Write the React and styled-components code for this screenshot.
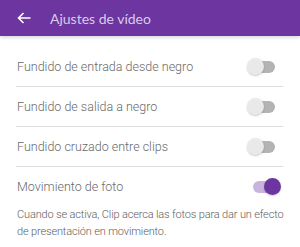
import React, { useState } from "react";
import styled, { createGlobalStyle } from "styled-components";

const GlobalStyle = createGlobalStyle`
  body {
    margin: 0;
    background: #ffffff;
    font-family: Roboto, "Liberation Sans", sans-serif;
  }
`;

const Page = styled.div`
  width: 300px;
  height: 247px;
  background: #ffffff;
  overflow: hidden;
`;

const Header = styled.header`
  height: 36px;
  background: #6c35a0;
  display: flex;
  align-items: center;
  padding-left: 17px;
  gap: 19px;
  box-shadow: 0 1px 4px rgba(0, 0, 0, 0.2);
  position: relative;
`;

const Title = styled.h1`
  margin: 0;
  font-family: Lato, sans-serif;
  font-size: 14px;
  font-weight: 400;
  color: #d9cbe9;
`;

const List = styled.div`
  padding: 11px 17px 0 16px;
`;

const Row = styled.div`
  height: ${(p) => p.$height || 40}px;
  box-sizing: border-box;
  display: flex;
  align-items: center;
  justify-content: space-between;
  border-bottom: ${(p) => (p.$last ? "none" : "1px solid #dcdcdc")};
  padding-left: 1px;
`;

const Label = styled.span`
  font-size: 12.5px;
  font-weight: 300;
  color: #6a6a6a;
`;

const Note = styled.p`
  margin: 0 -3px 0 0;
  padding-left: 1px;
  font-size: 11px;
  letter-spacing: -0.15px;
  font-weight: 300;
  line-height: 17px;
  color: #606060;
`;

const Switch = styled.button`
  position: relative;
  width: 34px;
  height: 17px;
  margin-right: 2px;
  padding: 0;
  border: none;
  background: transparent;
  cursor: pointer;
`;

const Track = styled.span`
  position: absolute;
  left: 6px;
  right: 6px;
  top: 2.5px;
  height: 12px;
  border-radius: 6px;
  background: ${(p) => (p.$on ? "#c8b4df" : "#b4b4b4")};
`;

const Thumb = styled.span`
  position: absolute;
  top: 0;
  left: ${(p) => (p.$on ? 17 : 0)}px;
  width: 17px;
  height: 17px;
  border-radius: 50%;
  background: ${(p) => (p.$on ? "#6c35a0" : "#e9e9e9")};
  box-shadow: 0 1px 2px rgba(0, 0, 0, 0.2);
`;

function Toggle({ on, onClick }) {
  return (
    <Switch onClick={onClick}>
      <Track $on={on} />
      <Thumb $on={on} />
    </Switch>
  );
}

const BackArrow = () => (
  <svg width="14" height="12" viewBox="0 0 14 12" fill="none">
    <path d="M13.5 6H1.5M6.5 1L1.5 6L6.5 11" stroke="#ffffff" strokeWidth="1.6" />
  </svg>
);

export default function App() {
  const [settings, setSettings] = useState([
    { label: "Fundido de entrada desde negro", on: false },
    { label: "Fundido de salida a negro", on: false },
    { label: "Fundido cruzado entre clips", on: false },
    { label: "Movimiento de foto", on: true },
  ]);

  const toggle = (i) => {
    setSettings(settings.map((s, j) => (j === i ? { ...s, on: !s.on } : s)));
  };

  return (
    <Page>
      <GlobalStyle />
      <Header>
        <BackArrow />
        <Title>Ajustes de vídeo</Title>
      </Header>
      <List>
        {settings.map((s, i) => (
          <Row key={i} $last={i === 3} $height={i === 3 ? 39 : 40}>
            <Label>{s.label}</Label>
            <Toggle on={s.on} onClick={() => toggle(i)} />
          </Row>
        ))}
        <Note>
          Cuando se activa, Clip acerca las fotos para dar un efecto de presentación en
          movimiento.
        </Note>
      </List>
    </Page>
  );
}
